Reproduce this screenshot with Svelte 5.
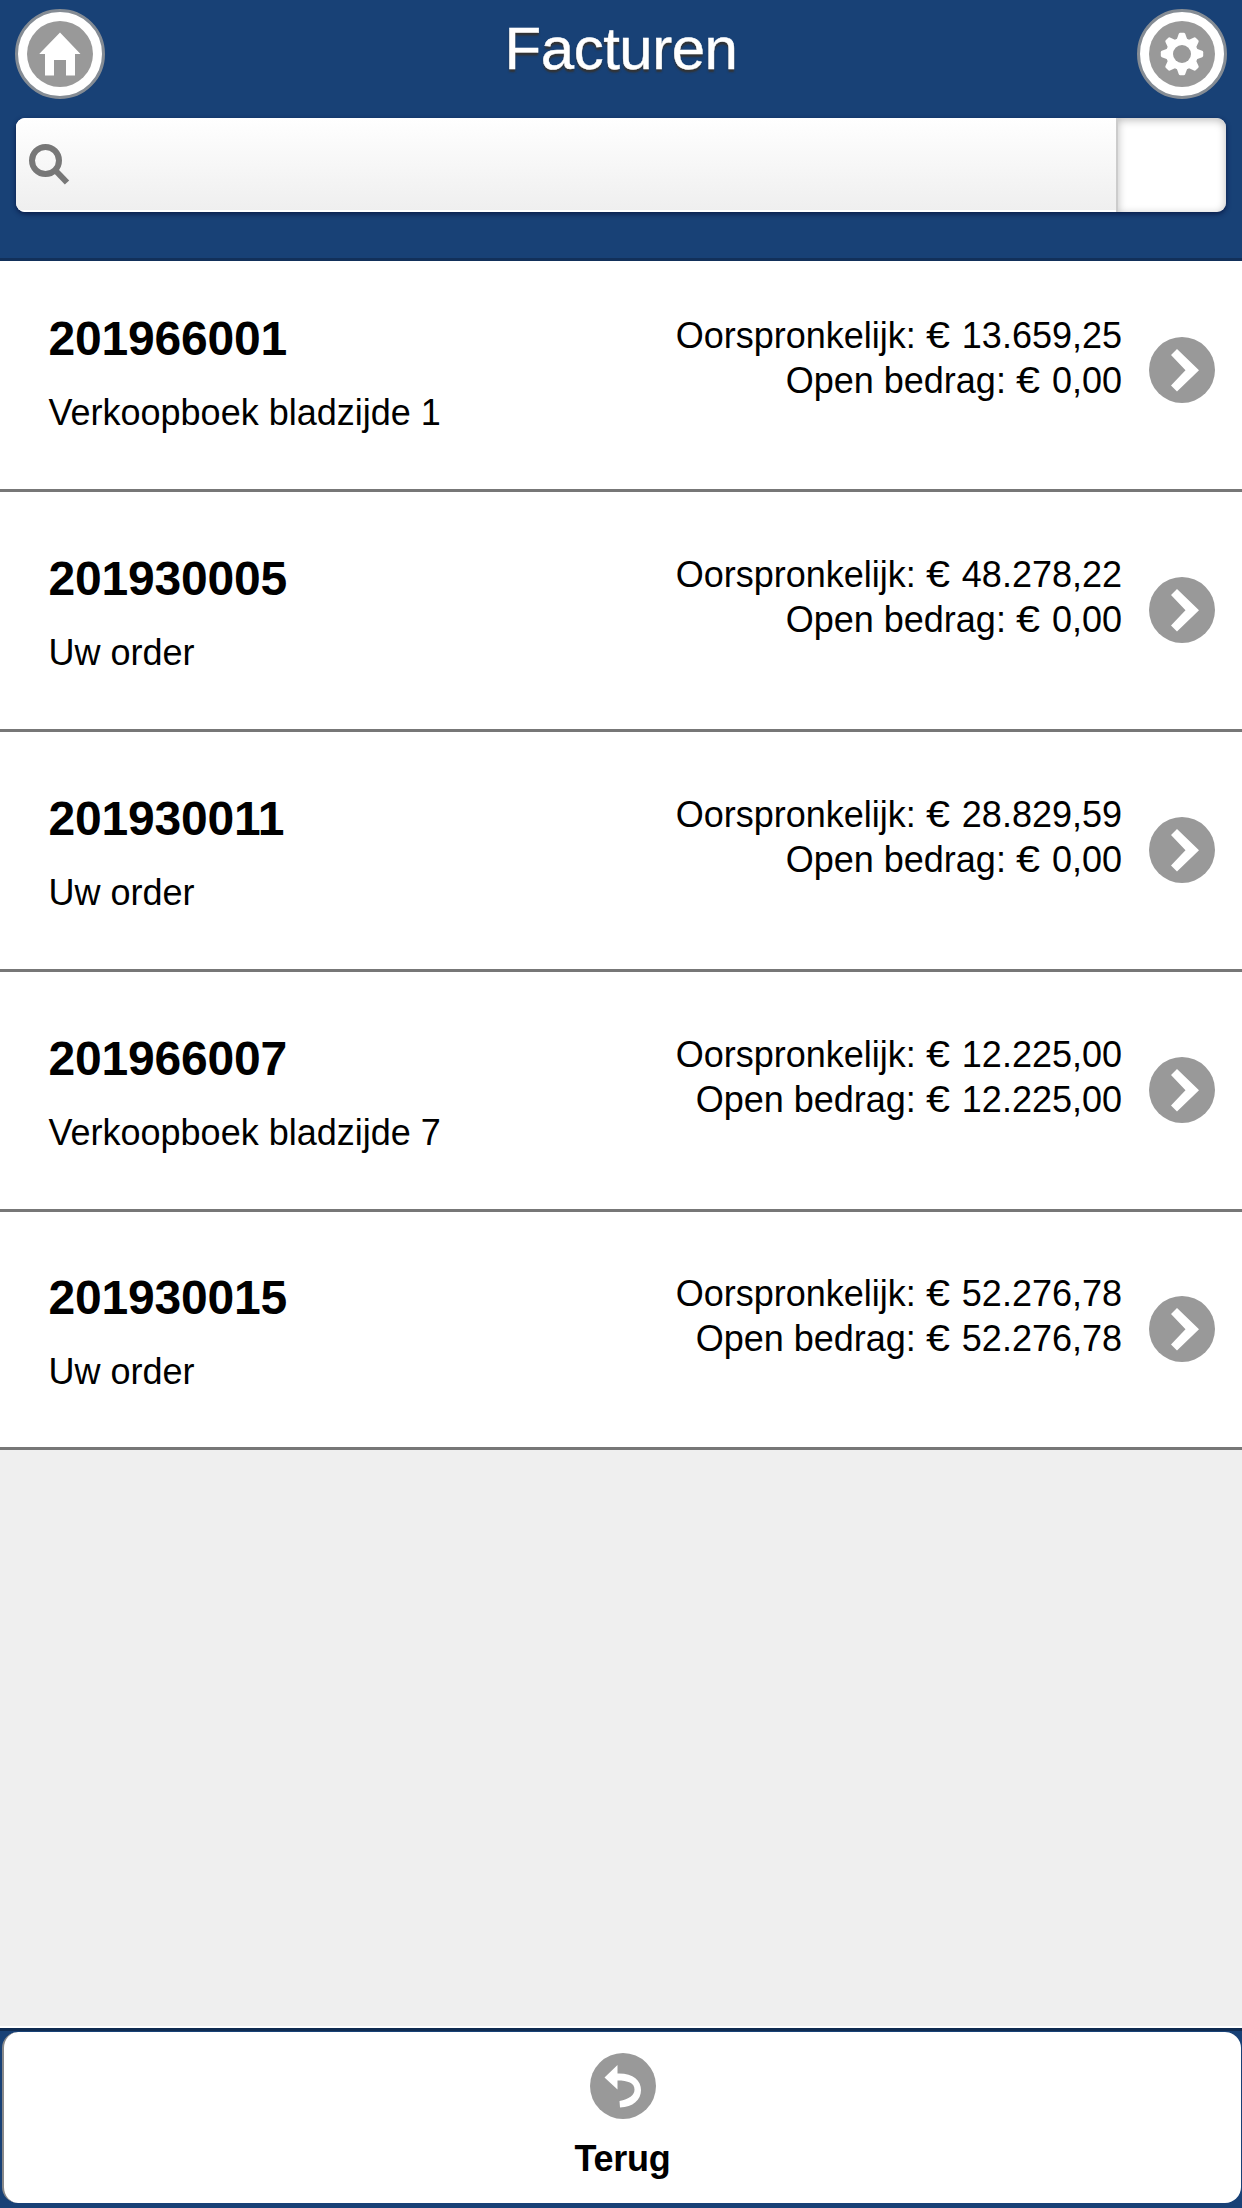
<script>
  const invoices = [
    { number: '201966001', description: 'Verkoopboek bladzijde 1', original: '13.659,25', open: '0,00' },
    { number: '201930005', description: 'Uw order', original: '48.278,22', open: '0,00' },
    { number: '201930011', description: 'Uw order', original: '28.829,59', open: '0,00' },
    { number: '201966007', description: 'Verkoopboek bladzijde 7', original: '12.225,00', open: '12.225,00' },
    { number: '201930015', description: 'Uw order', original: '52.276,78', open: '52.276,78' }
  ];
  const teeth = [0, 45, 90, 135, 180, 225, 270, 315];
</script>

<div class="screen">
  <header>
    <div class="bar">
      <button class="round" aria-label="Home">
        <svg width="66" height="66" viewBox="0 0 66 66">
          <circle cx="33" cy="33" r="33" fill="#999" />
          <path d="M33 11.5L53.500 33H48V54.500H39V39H27V54.500H18V33H12.200Z" fill="#fff" />
        </svg>
      </button>
      <h1>Facturen</h1>
      <button class="round" aria-label="Instellingen">
        <svg width="66" height="66" viewBox="0 0 66 66">
          <circle cx="33" cy="33" r="33" fill="#999" />
          <circle cx="33" cy="33" r="16" fill="#fff" />
          {#each teeth as angle}
            <path transform="rotate({angle} 33 33)" d="M27.500 19L29.800 12.800Q30.200 11.800 31.200 11.800H34.800Q35.800 11.800 36.200 12.800L38.500 19Z" fill="#fff" />
          {/each}
          <circle cx="33" cy="33" r="9" fill="#999" />
        </svg>
      </button>
    </div>
    <div class="search">
      <div class="field">
        <svg width="42" height="42" viewBox="0 0 42 42" fill="none" stroke="#777">
          <circle cx="16.500" cy="16.500" r="13.500" stroke-width="6" />
          <path d="M25.500 25.500L38 38.500" stroke-width="6" />
        </svg>
      </div>
      <div class="action"></div>
    </div>
  </header>

  <main>
    {#each invoices as invoice}
      <article>
        <div class="info">
          <h2>{invoice.number}</h2>
          <p>{invoice.description}</p>
        </div>
        <div class="amounts">
          <div>Oorspronkelijk: <span class="euro">€</span> {invoice.original}</div>
          <div>Open bedrag: <span class="euro">€</span> {invoice.open}</div>
        </div>
        <svg class="chevron" width="66" height="66" viewBox="0 0 66 66">
          <circle cx="33" cy="33" r="33" fill="#999" />
          <path d="M28 12L50 33.200L28 54.500L22 48.500L36.500 33.200L22 18Z" fill="#fff" />
        </svg>
      </article>
    {/each}
  </main>

  <footer>
    <button class="back">
      <svg width="66" height="66" viewBox="0 0 66 66">
        <circle cx="33" cy="33" r="33" fill="#999" />
        <path d="M14.500 24.500L27.500 12V20.500C43 20 51 27.500 51 37C51 47 43 54 30 54.500L29.500 48C39 46 44.500 42.500 44.500 36.500C44.500 30 38 27.500 27.500 27.500V36.500Z" fill="#fff" />
      </svg>
      <span>Terug</span>
    </button>
  </footer>
</div>

<style>
  :global(body) {
    background: #efefef;
  }
  .screen {
    box-sizing: border-box;
    width: 1242px;
    height: 2208px;
    display: flex;
    flex-direction: column;
    background: #efefef;
    font-family: "Liberation Sans", Arial, sans-serif;
    color: #000;
    overflow: hidden;
  }
  h1, h2, p {
    margin: 0;
  }
  button {
    font: inherit;
    color: inherit;
    border: 0;
    padding: 0;
  }
  svg {
    display: block;
    flex: none;
  }
  header {
    box-sizing: border-box;
    height: 261px;
    padding: 9px 15px 0 15px;
    background: #184176;
    border-bottom: 3px solid #12305a;
  }
  .bar {
    display: flex;
    justify-content: space-between;
    height: 109px;
  }
  .round {
    box-sizing: border-box;
    width: 90px;
    height: 90px;
    border-radius: 50%;
    border: 3px solid #858c94;
    background: #fff;
    display: flex;
    align-items: center;
    justify-content: center;
  }
  h1 {
    font-size: 60px;
    line-height: 70px;
    padding-top: 5px;
    letter-spacing: -0.5px;
    font-weight: 400;
    color: #fff;
    -webkit-text-stroke: 0.4px #fff;
    text-shadow: 0 3px 2px #333;
  }
  .search {
    box-sizing: border-box;
    display: flex;
    height: 94px;
    margin: 0 1px;
    border-radius: 9px;
    overflow: hidden;
    background: #fff;
    box-shadow: 0 2px 5px #0a1c48;
  }
  .field {
    flex: 1;
    display: flex;
    align-items: center;
    padding: 2px 0 0 13px;
    background: linear-gradient(#fff, #efefef);
    border-bottom: 2px solid #fff;
  }
  .action {
    box-sizing: border-box;
    width: 110px;
    border-left: 2px solid #ccc;
    border-radius: 0 9px 9px 0;
    box-shadow: inset 0 2px 8px #bbb;
  }
  article {
    box-sizing: border-box;
    height: 240px;
    padding: 52px 27px 0 48.5px;
    display: flex;
    align-items: flex-start;
    background: #fff;
    border-bottom: 3px solid #777;
  }
  article:first-child {
    height: 231px;
    padding-top: 43px;
  }
  article:last-child {
    height: 238px;
    padding-top: 51px;
  }
  .info {
    flex: 1;
  }
  h2 {
    font-size: 48px;
    line-height: 70px;
    letter-spacing: -0.2px;
  }
  p {
    font-size: 36px;
    line-height: 42px;
    padding-top: 18px;
  }
  .amounts {
    font-size: 36px;
    line-height: 45px;
    padding-top: 8px;
    text-align: right;
    white-space: nowrap;
  }
  article:first-child .amounts {
    padding-top: 9px;
  }
  .euro {
    display: inline-block;
    margin: 0 4px 0 2px;
    transform: scaleX(1.2);
  }
  .chevron {
    margin: 33px 0 0 27px;
  }
  footer {
    box-sizing: border-box;
    height: 180px;
    margin-top: auto;
    padding: 1px 1px 5px 2px;
    background: #184176;
    border-top: 3px solid #0f2b51;
    box-shadow: 0 -2px 0 #fff;
  }
  .back {
    box-sizing: border-box;
    width: 100%;
    height: 171px;
    padding-top: 21px;
    display: flex;
    flex-direction: column;
    align-items: center;
    gap: 19px;
    background: #fff;
    border-left: 2px solid #888;
    border-radius: 16px;
    font-size: 36px;
    line-height: 42px;
    letter-spacing: -0.3px;
    font-weight: 700;
  }
</style>
